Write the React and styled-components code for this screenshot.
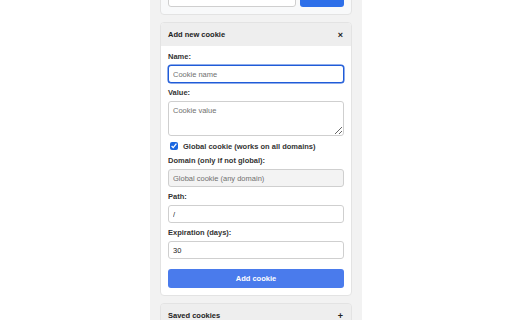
import React from "react";
import styled, { createGlobalStyle } from "styled-components";

const GlobalStyle = createGlobalStyle`
  html, body {
    margin: 0;
    padding: 0;
    background: #ffffff;
    font-family: "Liberation Sans", Arial, sans-serif;
    overflow: hidden;
  }
`;

const Column = styled.div`
  width: 192px;
  height: 360px;
  margin: -21px auto 0;
  padding: 0 10px;
  background: #f2f2f2;
  display: flex;
  flex-direction: column;
  gap: 7px;
`;

const Card = styled.section`
  background: ${({ $tint }) => ($tint ? "#f8f9fa" : "#ffffff")};
  border: 1px solid #e3e3e3;
  border-radius: 4px;
  overflow: hidden;
`;

const SearchRow = styled.div`
  display: flex;
  gap: 4px;
  padding: 8px 7px 7px;
`;

const Header = styled.div`
  height: 23px;
  padding: 0 7px;
  background: #eeeeee;
  display: flex;
  align-items: center;
  justify-content: space-between;
  font-size: 7.5px;
  font-weight: bold;
  color: #222;
`;

const Toggle = styled.span`
  font-size: 9px;
  font-weight: bold;
  color: #222;
  margin-right: 1px;
`;

const Body = styled.div`
  padding: 6px 7px 7px;
  display: flex;
  flex-direction: column;
`;

const Field = styled.div`
  display: flex;
  flex-direction: column;
  margin-bottom: 5px;
`;

const Label = styled.label`
  font-size: 7.5px;
  line-height: 10px;
  font-weight: bold;
  color: #333;
  margin-bottom: 3px;
`;

const Input = styled.input`
  box-sizing: border-box;
  width: 100%;
  height: 18px;
  padding: 0 4px;
  font-family: inherit;
  font-size: 7.5px;
  color: #222;
  border: 1px solid ${({ $focus }) => ($focus ? "#1f5bd8" : "#cfcfcf")};
  box-shadow: ${({ $focus }) => ($focus ? "0 0 0 0.5px #1f5bd8" : "none")};
  border-radius: 3px;
  background: ${({ disabled }) => (disabled ? "#f3f3f3" : "#ffffff")};
  outline: none;
  &::placeholder {
    color: #707070;
  }
`;

const SearchInput = styled(Input)`
  flex: 1;
  height: 19px;
`;

const SearchButton = styled.button`
  width: 44px;
  height: 19px;
  border: none;
  border-radius: 3px;
  background: #2d6fe9;
  color: #fff;
  font-family: inherit;
  font-size: 7.5px;
  font-weight: bold;
`;

const TextArea = styled.textarea`
  box-sizing: border-box;
  width: 100%;
  height: 35px;
  padding: 4px;
  font-family: inherit;
  font-size: 7.5px;
  border: 1px solid #cfcfcf;
  border-radius: 3px;
  resize: vertical;
  outline: none;
  &::placeholder {
    color: #707070;
  }
`;

const CheckRow = styled.label`
  display: flex;
  align-items: center;
  gap: 5px;
  height: 10px;
  padding-left: 2px;
  margin-bottom: 5px;
  font-size: 7.5px;
  font-weight: bold;
  color: #333;
`;

const Check = styled.input`
  width: 8px;
  height: 8px;
  margin: 0;
  accent-color: #1a66e0;
`;

const SubmitButton = styled.button`
  margin-top: 5px;
  height: 19px;
  border: none;
  border-radius: 3px;
  background: #4a7bec;
  color: #fff;
  font-family: inherit;
  font-size: 7.5px;
  font-weight: bold;
`;

export default function App() {
  return (
    <>
      <GlobalStyle />
      <Column>
        <Card $tint>
          <SearchRow>
            <SearchInput placeholder="Enter cookie name to search..." />
            <SearchButton>Search</SearchButton>
          </SearchRow>
        </Card>

        <Card>
          <Header>
            Add new cookie
            <Toggle>×</Toggle>
          </Header>
          <Body>
            <Field>
              <Label>Name:</Label>
              <Input $focus placeholder="Cookie name" />
            </Field>
            <Field>
              <Label>Value:</Label>
              <TextArea placeholder="Cookie value" />
            </Field>
            <CheckRow>
              <Check type="checkbox" defaultChecked />
              Global cookie (works on all domains)
            </CheckRow>
            <Field>
              <Label>Domain (only if not global):</Label>
              <Input disabled placeholder="Global cookie (any domain)" />
            </Field>
            <Field>
              <Label>Path:</Label>
              <Input defaultValue="/" />
            </Field>
            <Field>
              <Label>Expiration (days):</Label>
              <Input defaultValue="30" />
            </Field>
            <SubmitButton>Add cookie</SubmitButton>
          </Body>
        </Card>

        <Card>
          <Header>
            Saved cookies
            <Toggle>+</Toggle>
          </Header>
        </Card>
      </Column>
    </>
  );
}
